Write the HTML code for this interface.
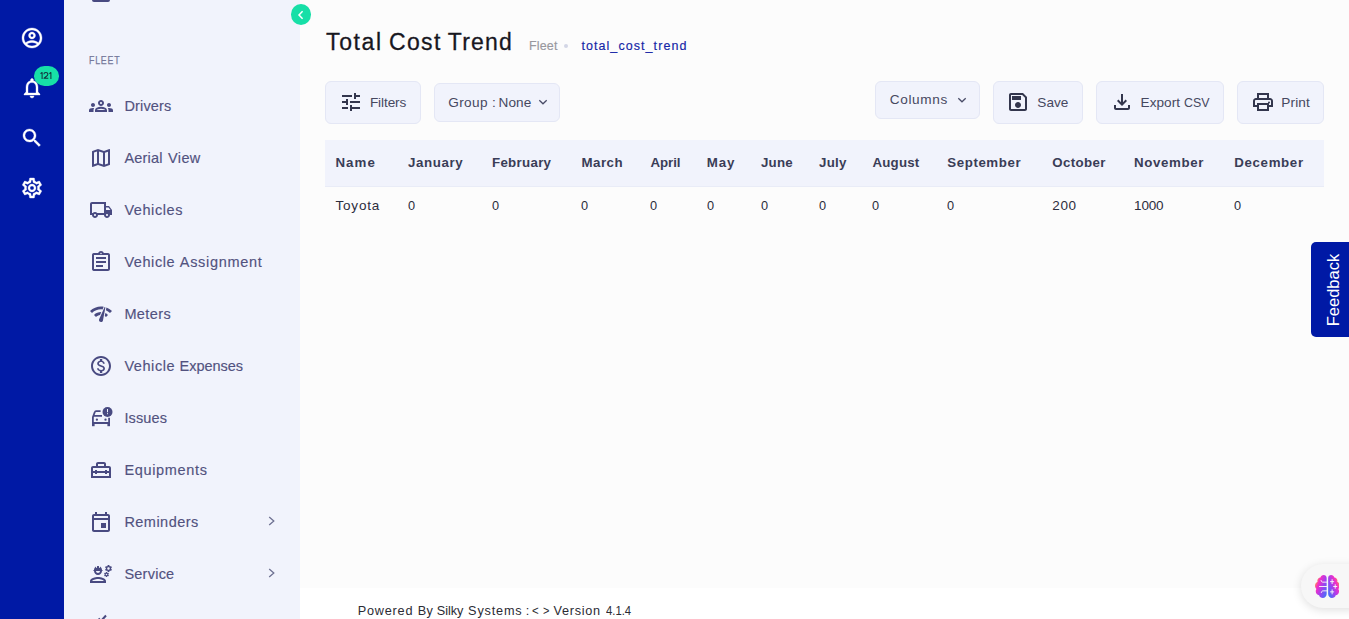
<!DOCTYPE html>
<html><head><meta charset="utf-8"><title>Total Cost Trend</title>
<style>
*{box-sizing:border-box;margin:0;padding:0}
html,body{width:1349px;height:619px;overflow:hidden;background:#fcfcfc;font-family:"Liberation Sans",sans-serif;}
.abs{position:absolute}
#rail{left:0;top:0;width:64px;height:619px;background:#0019a5}
#side{left:64px;top:0;width:236px;height:619px;background:#f1f3fc}
#main{left:300px;top:0;width:1049px;height:588px;background:#fcfcfc}
#foot{left:300px;top:588px;width:1049px;height:31px;background:#fff}
.t{position:absolute;white-space:nowrap;line-height:1;}
.ic{position:absolute;width:24px;height:24px}
.ic svg{display:block;width:24px;height:24px}
.nav{color:#50547f;font-size:15px}
.btn{position:absolute;background:#f1f3fc;border:1px solid #e4e7f5;border-radius:6px}
.bt{color:#4a4d68;font-size:14px}
.th{color:#33364d;font-size:14px;font-weight:bold}
.td{color:#2c2d3c;font-size:14px}
</style></head><body>
<div id="rail" class="abs"></div>
<div id="side" class="abs"></div>
<div id="main" class="abs"></div>
<div id="foot" class="abs"></div>
<svg class="abs" style="left:20px;top:26px" width="24" height="24" viewBox="0 0 24 24" fill="#ffffff" stroke="#ffffff" stroke-width=".35"><path d="M12 2C6.48 2 2 6.48 2 12s4.48 10 10 10 10-4.48 10-10S17.52 2 12 2zM7.07 18.28c.43-.9 3.05-1.78 4.93-1.78s4.51.88 4.93 1.78C15.57 19.36 13.86 20 12 20s-3.57-.64-4.93-1.72zm11.29-1.45c-1.43-1.74-4.9-2.33-6.36-2.33s-4.93.59-6.36 2.33C4.62 15.49 4 13.82 4 12c0-4.41 3.59-8 8-8s8 3.59 8 8c0 1.82-.62 3.49-1.64 4.83zM12 6c-1.94 0-3.5 1.56-3.5 3.5S10.06 13 12 13s3.5-1.56 3.5-3.5S13.94 6 12 6zm0 5c-.83 0-1.5-.67-1.5-1.5S11.17 8 12 8s1.5.67 1.5 1.5S12.83 11 12 11z"/></svg>
<svg class="abs" style="left:20px;top:76px" width="24" height="24" viewBox="0 0 24 24" fill="#ffffff" stroke="#ffffff" stroke-width=".35"><path d="M12 22c1.1 0 2-.9 2-2h-4c0 1.1.9 2 2 2zm6-6v-5c0-3.07-1.63-5.64-4.5-6.32V4c0-.83-.67-1.5-1.5-1.5s-1.5.67-1.5 1.5v.68C7.64 5.36 6 7.92 6 11v5l-2 2v1h16v-1l-2-2zm-2 1H8v-6c0-2.48 1.51-4.5 4-4.5s4 2.02 4 4.5v6z"/></svg>
<svg class="abs" style="left:20px;top:126px" width="24" height="24" viewBox="0 0 24 24" fill="#ffffff" stroke="#ffffff" stroke-width=".35"><path d="M15.5 14h-.79l-.28-.27C15.41 12.59 16 11.11 16 9.5 16 5.91 13.09 3 9.5 3S3 5.91 3 9.5 5.91 16 9.5 16c1.61 0 3.09-.59 4.23-1.57l.27.28v.79l5 4.99L20.49 19l-4.99-5zm-6 0C7.01 14 5 11.99 5 9.5S7.01 5 9.5 5 14 7.01 14 9.5 11.99 14 9.5 14z"/></svg>
<svg class="abs" style="left:20px;top:176px" width="24" height="24" viewBox="0 0 24 24" fill="#ffffff" stroke="#ffffff" stroke-width=".35"><path d="M19.43 12.98c.04-.32.07-.64.07-.98 0-.34-.03-.66-.07-.98l2.11-1.65c.19-.15.24-.42.12-.64l-2-3.46c-.09-.16-.26-.25-.44-.25-.06 0-.12.01-.17.03l-2.49 1c-.52-.4-1.08-.73-1.69-.98l-.38-2.65C14.46 2.18 14.25 2 14 2h-4c-.25 0-.46.18-.49.42l-.38 2.65c-.61.25-1.17.59-1.69.98l-2.49-1c-.06-.02-.12-.03-.18-.03-.17 0-.34.09-.43.25l-2 3.46c-.13.22-.07.49.12.64l2.11 1.65c-.04.32-.07.65-.07.98 0 .33.03.66.07.98l-2.11 1.65c-.19.15-.24.42-.12.64l2 3.46c.09.16.26.25.44.25.06 0 .12-.01.17-.03l2.49-1c.52.4 1.08.73 1.69.98l.38 2.65c.03.24.24.42.49.42h4c.25 0 .46-.18.49-.42l.38-2.65c.61-.25 1.17-.59 1.69-.98l2.49 1c.06.02.12.03.18.03.17 0 .34-.09.43-.25l2-3.46c.12-.22.07-.49-.12-.64l-2.11-1.65zm-1.98-1.71c.04.31.05.52.05.73 0 .21-.02.43-.05.73l-.14 1.13.89.7 1.08.84-.7 1.21-1.27-.51-1.04-.42-.9.68c-.43.32-.84.56-1.25.73l-1.06.43-.16 1.13-.2 1.35h-1.4l-.19-1.35-.16-1.13-1.06-.43c-.43-.18-.83-.41-1.23-.71l-.91-.7-1.06.43-1.27.51-.7-1.21 1.08-.84.89-.7-.14-1.13c-.03-.31-.05-.54-.05-.74s.02-.43.05-.73l.14-1.13-.89-.7-1.08-.84.7-1.21 1.27.51 1.04.42.9-.68c.43-.32.84-.56 1.25-.73l1.06-.43.16-1.13.2-1.35h1.39l.19 1.35.16 1.13 1.06.43c.43.18.83.41 1.23.71l.91.7 1.06-.43 1.27-.51.7 1.21-1.07.85-.89.7.14 1.13zM12 8c-2.21 0-4 1.79-4 4s1.79 4 4 4 4-1.79 4-4-1.79-4-4-4zm0 6c-1.1 0-2-.9-2-2s.9-2 2-2 2 .9 2 2-.9 2-2 2z"/></svg>
<div class="abs" style="left:34px;top:66px;width:25px;height:19.7px;border-radius:10.5px/9.85px;background:#17dfa7"></div>
<svg class="abs" style="left:34px;top:66px" width="25" height="20" viewBox="34 66 25 20" fill="none" stroke="#15323c" stroke-width="1.02" stroke-linejoin="round"><title>121</title><path d="M40.5 73.7 L42.1 72.5 L42.1 78.9 M43.9 74.3 C43.9 71.8 47.9 71.8 47.900 74.200 C47.900 75.600 45.600 76.800 44 78.350 L48.300 78.350 M49.300 73.700 L50.900 72.500 L50.900 78.900"/></svg>
<svg class="abs" style="left:89px;top:94px" width="24" height="24" viewBox="0 0 24 24" fill="#494a81"><path d="M4 13c1.1 0 2-.9 2-2s-.9-2-2-2-2 .9-2 2 .9 2 2 2zm1.13 1.1c-.37-.06-.74-.1-1.13-.1-.99 0-1.93.21-2.78.58C.48 14.900 0 15.620 0 16.430V18h4.500v-1.610c0-.83.23-1.610.63-2.290zM20 13c1.100 0 2-.9 2-2s-.9-2-2-2-2 .9-2 2 .9 2 2 2zm4 3.430c0-.81-.48-1.530-1.220-1.850-.85-.37-1.790-.58-2.780-.58-.39 0-.76.040-1.130.1.400.68.630 1.460.630 2.290V18H24v-1.570zm-7.760-2.780c-1.170-.52-2.610-.9-4.240-.9-1.630 0-3.070.39-4.240.9C6.680 14.130 6 15.210 6 16.390V18h12v-1.610c0-1.180-.68-2.260-1.760-2.740zM8.070 16c.09-.23.130-.39.910-.69.970-.38 1.990-.56 3.020-.56s2.050.18 3.020.56c.77.3.81.46.910.69H8.070zM12 8c.55 0 1 .45 1 1s-.45 1-1 1-1-.45-1-1 .45-1 1-1m0-2c-1.660 0-3 1.340-3 3s1.340 3 3 3 3-1.340 3-3-1.340-3-3-3z"/></svg>
<svg class="abs" style="left:89px;top:146px" width="24" height="24" viewBox="0 0 24 24" fill="#494a81"><path d="M20.5 3l-.16.03L15 5.1 9 3 3.36 4.9c-.21.07-.36.25-.36.48V20.500c0 .28.22.5.5.5l.16-.03L9 18.900l6 2.100 5.640-1.900c.21-.07.36-.25.36-.48V3.500c0-.28-.22-.5-.5-.5zM10 5.470l4 1.400v11.660l-4-1.400V5.470zm-5 .99l3-1.010v11.700l-3 1.160V6.460zm14 11.080l-3 1.010V6.860l3-1.160v11.840z"/></svg>
<svg class="abs" style="left:89px;top:198px" width="24" height="24" viewBox="0 0 24 24" fill="#494a81"><path d="M20 8h-3V4H3c-1.1 0-2 .9-2 2v11h2c0 1.660 1.340 3 3 3s3-1.340 3-3h6c0 1.660 1.340 3 3 3s3-1.340 3-3h2v-5l-3-4zm-.5 1.500l1.960 2.500H17V9.500h2.500zM6 18c-.55 0-1-.45-1-1s.45-1 1-1 1 .45 1 1-.45 1-1 1zm2.220-3c-.55-.61-1.330-1-2.220-1s-1.670.39-2.220 1H3V6h12v9H8.220zM18 18c-.55 0-1-.45-1-1s.45-1 1-1 1 .45 1 1-.45 1-1 1z"/></svg>
<svg class="abs" style="left:89px;top:250px" width="24" height="24" viewBox="0 0 24 24" fill="#494a81"><path d="M7 15h7v2H7zm0-4h10v2H7zm0-4h10v2H7zm12-4h-4.180C14.400 1.840 13.300 1 12 1c-1.300 0-2.400.84-2.820 2H5c-.14 0-.27.010-.4.040-.39.080-.74.280-1.010.55-.18.180-.33.400-.43.640-.1.230-.16.490-.16.770v14c0 .27.060.54.160.78s.25.450.43.640c.27.270.62.470 1.010.55.130.02.260.03.400.03h14c1.100 0 2-.9 2-2V5c0-1.100-.9-2-2-2zm-7-.25c.41 0 .75.340.75.750s-.34.750-.75.750-.75-.34-.75-.75.340-.75.750-.75zM19 19H5V5h14v14z"/></svg>
<svg class="abs" style="left:89px;top:302px" width="24" height="24" viewBox="0 0 24 24" fill="#494a81"><path d="M15.9 5c-.17 0-.32.09-.41.23l-.07.15-5.180 11.650c-.16.290-.26.610-.26.960 0 1.110.9 2.010 2.010 2.010.96 0 1.770-.68 1.960-1.590l.01-.03L16.400 5.500c0-.28-.22-.5-.5-.5zM1 9l2 2c2.880-2.880 6.790-4.080 10.530-3.620l1.190-2.680C9.890 3.840 4.740 5.270 1 9zm20 2l2-2c-1.640-1.640-3.550-2.820-5.590-3.570l-.53 2.820c1.500.62 2.900 1.530 4.120 2.750zm-4 4l2-2c-.8-.8-1.700-1.420-2.660-1.890l-.55 2.920c.42.270.83.590 1.210.97zM5 13l2 2c1.130-1.130 2.560-1.790 4.030-2l1.280-2.880c-2.630-.08-5.300.87-7.310 2.880z"/></svg>
<svg class="abs" style="left:89px;top:354px" width="24" height="24" viewBox="0 0 24 24" fill="#494a81"><path d="M12 2C6.480 2 2 6.480 2 12s4.480 10 10 10 10-4.480 10-10S17.520 2 12 2zm0 18c-4.410 0-8-3.590-8-8s3.590-8 8-8 8 3.590 8 8-3.590 8-8 8zm.31-8.860c-1.770-.45-2.340-.94-2.340-1.670 0-.84.790-1.430 2.100-1.430 1.380 0 1.900.66 1.940 1.640h1.710c-.05-1.340-.87-2.570-2.490-2.970V5H10.900v1.690c-1.510.32-2.720 1.300-2.720 2.810 0 1.790 1.490 2.690 3.660 3.210 1.950.46 2.340 1.150 2.340 1.870 0 .53-.39 1.390-2.100 1.390-1.600 0-2.230-.72-2.320-1.640H8.040c.1 1.700 1.360 2.660 2.860 2.970V19h2.340v-1.670c1.520-.29 2.720-1.160 2.730-2.770-.01-2.200-1.900-2.960-3.660-3.420z"/></svg>
<svg class="abs" style="left:89px;top:406px" width="24" height="24" viewBox="0 0 24 24" fill="#494a81" stroke="#494a81"><circle cx="18.5" cy="6" r="5" stroke="none"/><rect x="18" y="3" width="1" height="3.2" fill="#f1f3fc" stroke="none"/><rect x="18" y="7.2" width="1" height="1" fill="#f1f3fc" stroke="none"/><path d="M11.6 5.1H7c-.6 0-1 .3-1.200.9L3.900 11.200V20M4.900 9.800H13M3.900 17H20.100M20.100 11.800V20" fill="none" stroke-width="1.8"/><rect x="3" y="17" width="2.600" height="3.200" stroke="none"/><rect x="18.400" y="17" width="2.600" height="3.200" stroke="none"/><circle cx="7.900" cy="13.700" r="1.150" stroke="none"/><circle cx="16.500" cy="13.700" r="1.150" stroke="none"/></svg>
<svg class="abs" style="left:89px;top:458px" width="24" height="24" viewBox="0 0 24 24" fill="#494a81"><path d="M20 8h-3V6c0-1.100-.9-2-2-2H9c-1.100 0-2 .9-2 2v2H4c-1.100 0-2 .9-2 2v10h20V10c0-1.100-.9-2-2-2zM9 6h6v2H9V6zm11 12H4v-3h2v1h2v-1h8v1h2v-1h2v3zm-2-5v-1h-2v1H8v-1H6v1H4v-3h16v3h-2z"/></svg>
<svg class="abs" style="left:89px;top:510px" width="24" height="24" viewBox="0 0 24 24" fill="#494a81"><path d="M19 4h-1V2h-2v2H8V2H6v2H5c-1.110 0-1.990.9-1.990 2L3 20c0 1.100.890 2 2 2h14c1.100 0 2-.9 2-2V6c0-1.100-.9-2-2-2zm0 16H5V10h14v10zm0-12H5V6h14v2zm-7 5h5v5h-5z"/></svg>
<svg class="abs" style="left:89px;top:562px" width="24" height="24" viewBox="0 0 24 24" fill="#494a81"><path d="M9 15c-2.670 0-8 1.340-8 4v2h16v-2c0-2.660-5.330-4-8-4zm-6 4c.22-.72 3.310-2 6-2 2.700 0 5.800 1.290 6 2H3zM4.740 9H5c0 2.210 1.790 4 4 4s4-1.790 4-4h.26c.27 0 .49-.22.49-.49v-.020c0-.27-.22-.49-.49-.49H13c0-1.480-.81-2.750-2-3.450V5.500c0 .28-.22.5-.5.5s-.5-.22-.5-.5V4.140C9.680 4.060 9.350 4 9 4s-.68.060-1 .14V5.500c0 .28-.22.5-.5.5S7 5.780 7 5.500v-.950C5.810 5.250 5 6.520 5 8h-.26c-.27 0-.49.220-.49.490v.030c0 .26.220.48.490.48zM11 9c0 1.100-.9 2-2 2s-2-.9-2-2h4zM22.100 6.840c.01-.11.020-.22.020-.34 0-.12-.010-.23-.030-.34l.74-.58c.07-.05.080-.15.040-.22l-.7-1.210c-.04-.08-.14-.1-.21-.08l-.86.350c-.18-.14-.38-.25-.59-.34l-.13-.93c-.02-.09-.09-.15-.18-.15h-1.400c-.09 0-.16.060-.17.150l-.13.930c-.21.090-.41.210-.59.340l-.87-.350c-.08-.03-.17 0-.21.080l-.7 1.210c-.04.080-.03.170.04.220l.74.580c-.02.110-.03.230-.03.340 0 .11.010.23.030.34l-.74.580c-.07.050-.08.150-.04.220l.7 1.210c.04.080.14.1.21.080l.87-.350c.18.140.38.250.59.340l.13.930c.01.090.08.150.17.150h1.400c.09 0 .16-.060.17-.150l.13-.930c.21-.09.41-.21.59-.340l.87.350c.08.030.17 0 .21-.080l.7-1.210c.04-.08.030-.17-.04-.220l-.73-.58zm-2.600.91c-.69 0-1.250-.56-1.250-1.250s.56-1.250 1.250-1.250 1.250.56 1.250 1.250-.56 1.250-1.250 1.250zM19.920 11.680l-.5-.87c-.03-.06-.1-.08-.15-.06l-.62.250c-.13-.1-.27-.18-.42-.24l-.09-.66c-.02-.06-.08-.1-.14-.1h-1c-.06 0-.11.040-.12.110l-.09.660c-.15.060-.29.150-.42.240l-.62-.250c-.06-.02-.12 0-.15.060l-.5.870c-.03.060-.02.120.03.160l.53.410c-.01.080-.02.160-.02.240 0 .08.010.17.020.24l-.53.410c-.05.040-.06.110-.03.160l.5.870c.03.060.1.080.15.060l.62-.250c.13.1.27.18.42.24l.09.660c.01.070.06.110.12.110h1c.06 0 .12-.040.12-.110l.09-.660c.15-.06.29-.15.420-.24l.62.250c.06.020.12 0 .15-.060l.5-.870c.03-.06.020-.12-.03-.160l-.52-.410c.01-.08.020-.16.020-.24 0-.08-.01-.17-.02-.24l.53-.410c.05-.04.060-.11.040-.170zm-2.420 1.650c-.46 0-.83-.38-.83-.83 0-.46.380-.83.830-.83s.83.380.83.830c0 .46-.37.830-.83.830z"/></svg>
<svg class="abs" style="left:266px;top:515px" width="12" height="12" viewBox="0 0 12 12" fill="none" stroke="#6e7192" stroke-width="1.3"><path d="M3.2 2 L7.8 6 L3.2 10"/></svg>
<svg class="abs" style="left:266px;top:567px" width="12" height="12" viewBox="0 0 12 12" fill="none" stroke="#6e7192" stroke-width="1.3"><path d="M3.2 2 L7.8 6 L3.2 10"/></svg>
<div class="abs" style="left:92px;top:-2px;width:18px;height:4px;background:#494a81;border-radius:0 0 2px 2px"></div>
<svg class="abs" style="left:88.6px;top:610.6px" width="24" height="24" viewBox="0 0 24 24" fill="none" stroke="#494a81" stroke-width="2"><path d="M9.5 7.5 L12 10 L17 4.5"/></svg>
<div class="abs" style="left:290.6px;top:4.4px;width:20.5px;height:21px;border-radius:50%;background:#17dfa7"></div>
<svg class="abs" style="left:294.6px;top:8.9px" width="12" height="12" viewBox="0 0 12 12" fill="none" stroke="#fff" stroke-width="1.5"><path d="M7.6 2.300 L4 6 L7.600 9.700"/></svg>
<div class="abs" style="left:563.9px;top:44px;width:4px;height:4px;border-radius:50%;background:#d3d6e6"></div>
<div class="btn" style="left:325px;top:81px;width:96px;height:43px"></div>
<div class="btn" style="left:434px;top:83px;width:126px;height:38.5px"></div>
<div class="btn" style="left:875px;top:81px;width:105px;height:37.5px"></div>
<div class="btn" style="left:993px;top:81px;width:90px;height:43px"></div>
<div class="btn" style="left:1096px;top:81px;width:128px;height:43px"></div>
<div class="btn" style="left:1237px;top:81px;width:87px;height:43px"></div>
<svg class="abs" style="left:339px;top:90px" width="24" height="24" viewBox="0 0 24 24" fill="#33364d"><path d="M3 17v2h6v-2H3zM3 5v2h10V5H3zm10 16v-2h8v-2h-8v-2h-2v6h2zM7 9v2H3v2h4v2h2V9H7zm14 4v-2H11v2h10zm-6-4h2V7h4V5h-4V3h-2v6z"/></svg>
<svg class="abs" style="left:1006px;top:90px" width="24" height="24" viewBox="0 0 24 24" fill="#33364d"><path d="M17 3H5c-1.110 0-2 .9-2 2v14c0 1.100.890 2 2 2h14c1.100 0 2-.9 2-2V7l-4-4zm2 16H5V5h11.170L19 7.830V19zm-7-7c-1.660 0-3 1.340-3 3s1.340 3 3 3 3-1.340 3-3-1.340-3-3-3zM6 6h9v4H6z"/></svg>
<svg class="abs" style="left:1109.5px;top:90px" width="24" height="24" viewBox="0 0 24 24" fill="#33364d"><path d="M18 15v3H6v-3H4v3c0 1.100.9 2 2 2h12c1.100 0 2-.9 2-2v-3h-2zm-1-4l-1.410-1.410L13 12.170V4h-2v8.170L8.410 9.590 7 11l5 5 5-5z"/></svg>
<svg class="abs" style="left:1251px;top:90px" width="24" height="24" viewBox="0 0 24 24" fill="#33364d"><path d="M19 8h-1V3H6v5H5c-1.660 0-3 1.340-3 3v6h4v4h12v-4h4v-6c0-1.660-1.340-3-3-3zM8 5h8v3H8V5zm8 12v2H8v-4h8v2zm2-2v-2H6v2H4v-4c0-.55.450-1 1-1h14c.55 0 1 .45 1 1v4h-2z M18 11.500a1 1 0 1 0 0 2 1 1 0 0 0 0-2z"/></svg>
<svg class="abs" style="left:536.7px;top:96px" width="12" height="12" viewBox="0 0 12 12" fill="none" stroke="#4a4d68" stroke-width="1.3"><path d="M2.3 4.3 L6 7.8 L9.700 4.300"/></svg>
<svg class="abs" style="left:956.2px;top:93.7px" width="12" height="12" viewBox="0 0 12 12" fill="none" stroke="#4a4d68" stroke-width="1.3"><path d="M2.3 4.3 L6 7.8 L9.700 4.300"/></svg>
<div class="abs" style="left:325px;top:140px;width:999px;height:47px;background:#f1f3fc;border-bottom:1px solid #e9ecf7"></div>
<div class="abs" style="left:1311px;top:242px;width:38px;height:95px;background:#0019a5;border-radius:5px 0 0 5px"></div>
<div class="t" style="left:1332.700px;top:289.500px;font-size:16.5px;color:#fff;transform:translate(-50%,-50%) rotate(-90deg)">Feedback</div>
<div class="abs" style="left:1301px;top:564px;width:70px;height:44px;border-radius:22px;background:#f7f7f7;box-shadow:0 2px 10px rgba(0,0,0,.13)"></div>
<svg class="abs" style="left:1314.6px;top:574.5px" width="24.8" height="23" viewBox="0 0 20 18" preserveAspectRatio="none"><defs><linearGradient id="bg" x1="0" y1="0.12" x2="1" y2="0.88"><stop offset="0.1" stop-color="#ffa23a"/><stop offset=".3" stop-color="#f52fc4"/><stop offset=".62" stop-color="#a040f0"/><stop offset="1" stop-color="#3f74f8"/></linearGradient></defs><g fill="url(#bg)"><path d="M9.4 2.3C9.4 1 8.3 0 7 0 5.700 0 4.700.8 4.400 1.900 3 1.900 1.900 3 1.900 4.400c0 .3.050.6.150.9C.850 5.800 0 7 0 8.400c0 1 .450 1.900 1.150 2.500-.35.500-.55 1.100-.55 1.800 0 1.600 1.200 2.900 2.700 3.100.4 1.300 1.600 2.200 3 2.200 1.700 0 3.100-1.400 3.100-3.100z"/><path transform="translate(20,0) scale(-1,1)" d="M9.4 2.3C9.4 1 8.3 0 7 0 5.700 0 4.700.8 4.400 1.900 3 1.900 1.900 3 1.900 4.400c0 .3.050.6.150.9C.850 5.800 0 7 0 8.400c0 1 .450 1.900 1.150 2.500-.35.500-.55 1.100-.55 1.800 0 1.600 1.200 2.900 2.700 3.100.4 1.300 1.600 2.200 3 2.200 1.700 0 3.100-1.400 3.100-3.100z"/></g><g stroke="#f7f7f7" stroke-width=".75" fill="none" stroke-linecap="round"><path d="M9.400 5.600H6.400c-.9 0-1.400-.5-1.500-1.300M9.400 9H3.600M9.400 12.400H6.600c-.9 0-1.400.5-1.500 1.300"/><path d="M13.800 3.600v3.200M12.500 5.200h2.600M16.300 7.600v2.800M15 9h2.600M13.800 11.600v3.200M12.500 13.200h2.600"/></g></svg>
<div class="t" style="left:89.4px;top:54.69px;font-size:11px;font-weight:normal;color:#74779a;letter-spacing:1.00px;transform-origin:0 0;transform:scaleX(0.8003);-webkit-text-stroke:0.25px #74779a">FLEET</div>
<div class="t" style="left:124.4px;top:98.73px;font-size:14.5px;font-weight:normal;color:#52527f;letter-spacing:0.16px;-webkit-text-stroke:0.15px #52527f">Drivers</div>
<div class="t" style="left:124.4px;top:150.73px;font-size:14.5px;font-weight:normal;color:#52527f;letter-spacing:0.18px;-webkit-text-stroke:0.15px #52527f">Aerial</div>
<div class="t" style="left:168.1px;top:150.73px;font-size:14.5px;font-weight:normal;color:#52527f;letter-spacing:0.34px;-webkit-text-stroke:0.15px #52527f">View</div>
<div class="t" style="left:124.4px;top:202.73px;font-size:14.5px;font-weight:normal;color:#52527f;letter-spacing:0.57px;-webkit-text-stroke:0.15px #52527f">Vehicles</div>
<div class="t" style="left:124.4px;top:254.73px;font-size:14.5px;font-weight:normal;color:#52527f;letter-spacing:0.57px;-webkit-text-stroke:0.15px #52527f">Vehicle</div>
<div class="t" style="left:179.8px;top:254.73px;font-size:14.5px;font-weight:normal;color:#52527f;letter-spacing:0.69px;-webkit-text-stroke:0.15px #52527f">Assignment</div>
<div class="t" style="left:124.4px;top:306.73px;font-size:14.5px;font-weight:normal;color:#52527f;letter-spacing:0.39px;-webkit-text-stroke:0.15px #52527f">Meters</div>
<div class="t" style="left:124.4px;top:358.73px;font-size:14.5px;font-weight:normal;color:#52527f;letter-spacing:0.57px;-webkit-text-stroke:0.15px #52527f">Vehicle</div>
<div class="t" style="left:179.5px;top:358.73px;font-size:14.5px;font-weight:normal;color:#52527f;letter-spacing:-0.01px;-webkit-text-stroke:0.15px #52527f">Expenses</div>
<div class="t" style="left:124.4px;top:410.73px;font-size:14.5px;font-weight:normal;color:#52527f;letter-spacing:0.12px;-webkit-text-stroke:0.15px #52527f">Issues</div>
<div class="t" style="left:124.4px;top:462.73px;font-size:14.5px;font-weight:normal;color:#52527f;letter-spacing:0.66px;-webkit-text-stroke:0.15px #52527f">Equipments</div>
<div class="t" style="left:124.4px;top:514.73px;font-size:14.5px;font-weight:normal;color:#52527f;letter-spacing:0.47px;-webkit-text-stroke:0.15px #52527f">Reminders</div>
<div class="t" style="left:124.4px;top:566.73px;font-size:14.5px;font-weight:normal;color:#52527f;letter-spacing:0.24px;-webkit-text-stroke:0.15px #52527f">Service</div>
<div class="t" style="left:326.0px;top:30.53px;font-size:23px;font-weight:normal;color:#17171f;letter-spacing:1.63px;-webkit-text-stroke:0.28px #17171f">Total</div>
<div class="t" style="left:388.9px;top:30.53px;font-size:23px;font-weight:normal;color:#17171f;letter-spacing:1.40px;-webkit-text-stroke:0.28px #17171f">Cost</div>
<div class="t" style="left:447.8px;top:30.53px;font-size:23px;font-weight:normal;color:#17171f;letter-spacing:1.17px;-webkit-text-stroke:0.28px #17171f">Trend</div>
<div class="t" style="left:529.1px;top:40.42px;font-size:12.5px;font-weight:normal;color:#98989e;letter-spacing:0.13px;-webkit-text-stroke:0.15px #98989e">Fleet</div>
<div class="t" style="left:581.4px;top:40.42px;font-size:12.5px;font-weight:normal;color:#1425a6;letter-spacing:1.07px;-webkit-text-stroke:0.15px #1425a6">total_cost_trend</div>
<div class="t" style="left:369.9px;top:96.49px;font-size:13.6px;font-weight:normal;color:#46485f;letter-spacing:-0.09px">Filters</div>
<div class="t" style="left:448.2px;top:96.49px;font-size:13.6px;font-weight:normal;color:#46485f;letter-spacing:0.40px">Group</div>
<div class="t" style="left:492.0px;top:96.49px;font-size:13.6px;font-weight:normal;color:#46485f;letter-spacing:0.00px">:</div>
<div class="t" style="left:498.5px;top:96.49px;font-size:13.6px;font-weight:normal;color:#46485f;letter-spacing:0.07px">None</div>
<div class="t" style="left:889.7px;top:92.79px;font-size:13.6px;font-weight:normal;color:#46485f;letter-spacing:0.68px">Columns</div>
<div class="t" style="left:1037.3px;top:96.49px;font-size:13.6px;font-weight:normal;color:#46485f;letter-spacing:0.04px">Save</div>
<div class="t" style="left:1140.6px;top:96.49px;font-size:13.6px;font-weight:normal;color:#46485f;letter-spacing:0.02px">Export</div>
<div class="t" style="left:1183.8px;top:96.49px;font-size:13.6px;font-weight:normal;color:#46485f;letter-spacing:0.00px;transform-origin:0 0;transform:scaleX(0.9122)">CSV</div>
<div class="t" style="left:1281.2px;top:96.49px;font-size:13.6px;font-weight:normal;color:#46485f;letter-spacing:0.19px">Print</div>
<div class="t" style="left:357.8px;top:604.95px;font-size:12.7px;font-weight:normal;color:#2b2b33;letter-spacing:0.77px">Powered</div>
<div class="t" style="left:417.8px;top:604.95px;font-size:12.7px;font-weight:normal;color:#2b2b33;letter-spacing:0.19px">By</div>
<div class="t" style="left:436.7px;top:604.95px;font-size:12.7px;font-weight:normal;color:#2b2b33;letter-spacing:-0.02px">Silky</div>
<div class="t" style="left:468.1px;top:604.95px;font-size:12.7px;font-weight:normal;color:#2b2b33;letter-spacing:0.82px">Systems</div>
<div class="t" style="left:525.8px;top:604.95px;font-size:12.7px;font-weight:normal;color:#2b2b33;letter-spacing:0.00px">:</div>
<div class="t" style="left:532.4px;top:604.95px;font-size:12.7px;font-weight:normal;color:#2b2b33;letter-spacing:0.00px;transform-origin:0 0;transform:scaleX(0.9027)">&lt;</div>
<div class="t" style="left:543.0px;top:604.95px;font-size:12.7px;font-weight:normal;color:#2b2b33;letter-spacing:0.00px;transform-origin:0 0;transform:scaleX(0.8623)">&gt;</div>
<div class="t" style="left:553.6px;top:604.95px;font-size:12.7px;font-weight:normal;color:#2b2b33;letter-spacing:0.70px">Version</div>
<div class="t" style="left:605.6px;top:604.95px;font-size:12.7px;font-weight:normal;color:#2b2b33;letter-spacing:0.00px;transform-origin:0 0;transform:scaleX(0.8895)">4.1.4</div>
<div class="t" style="left:335.4px;top:155.94px;font-size:13.3px;font-weight:bold;color:#3a3d57;letter-spacing:1.06px">Name</div>
<div class="t" style="left:407.9px;top:155.94px;font-size:13.3px;font-weight:bold;color:#3a3d57;letter-spacing:0.63px">January</div>
<div class="t" style="left:492.0px;top:155.94px;font-size:13.3px;font-weight:bold;color:#3a3d57;letter-spacing:0.30px">February</div>
<div class="t" style="left:581.4px;top:155.94px;font-size:13.3px;font-weight:bold;color:#3a3d57;letter-spacing:0.51px">March</div>
<div class="t" style="left:650.4px;top:155.94px;font-size:13.3px;font-weight:bold;color:#3a3d57;letter-spacing:-0.05px">April</div>
<div class="t" style="left:706.7px;top:155.94px;font-size:13.3px;font-weight:bold;color:#3a3d57;letter-spacing:0.91px">May</div>
<div class="t" style="left:761.0px;top:155.94px;font-size:13.3px;font-weight:bold;color:#3a3d57;letter-spacing:0.18px">June</div>
<div class="t" style="left:819.1px;top:155.94px;font-size:13.3px;font-weight:bold;color:#3a3d57;letter-spacing:0.23px">July</div>
<div class="t" style="left:872.4px;top:155.94px;font-size:13.3px;font-weight:bold;color:#3a3d57;letter-spacing:0.22px">August</div>
<div class="t" style="left:947.3px;top:155.94px;font-size:13.3px;font-weight:bold;color:#3a3d57;letter-spacing:0.57px">September</div>
<div class="t" style="left:1052.3px;top:155.94px;font-size:13.3px;font-weight:bold;color:#3a3d57;letter-spacing:0.34px">October</div>
<div class="t" style="left:1134.1px;top:155.94px;font-size:13.3px;font-weight:bold;color:#3a3d57;letter-spacing:0.60px">November</div>
<div class="t" style="left:1234.3px;top:155.94px;font-size:13.3px;font-weight:bold;color:#3a3d57;letter-spacing:0.64px">December</div>
<div class="t" style="left:335.4px;top:199.17px;font-size:13.5px;font-weight:normal;color:#2c2d3c;letter-spacing:0.84px">Toyota</div>
<div class="t" style="left:407.9px;top:199.17px;font-size:13.5px;font-weight:normal;color:#2c2d3c;letter-spacing:0.00px;transform-origin:0 0;transform:scaleX(0.9447)">0</div>
<div class="t" style="left:492.0px;top:199.17px;font-size:13.5px;font-weight:normal;color:#2c2d3c;letter-spacing:0.00px;transform-origin:0 0;transform:scaleX(0.9447)">0</div>
<div class="t" style="left:581.4px;top:199.17px;font-size:13.5px;font-weight:normal;color:#2c2d3c;letter-spacing:0.00px;transform-origin:0 0;transform:scaleX(0.9447)">0</div>
<div class="t" style="left:650.4px;top:199.17px;font-size:13.5px;font-weight:normal;color:#2c2d3c;letter-spacing:0.00px;transform-origin:0 0;transform:scaleX(0.9447)">0</div>
<div class="t" style="left:706.7px;top:199.17px;font-size:13.5px;font-weight:normal;color:#2c2d3c;letter-spacing:0.00px;transform-origin:0 0;transform:scaleX(0.9447)">0</div>
<div class="t" style="left:761.0px;top:199.17px;font-size:13.5px;font-weight:normal;color:#2c2d3c;letter-spacing:0.00px;transform-origin:0 0;transform:scaleX(0.9447)">0</div>
<div class="t" style="left:819.1px;top:199.17px;font-size:13.5px;font-weight:normal;color:#2c2d3c;letter-spacing:0.00px;transform-origin:0 0;transform:scaleX(0.9447)">0</div>
<div class="t" style="left:872.4px;top:199.17px;font-size:13.5px;font-weight:normal;color:#2c2d3c;letter-spacing:0.00px;transform-origin:0 0;transform:scaleX(0.9447)">0</div>
<div class="t" style="left:947.3px;top:199.17px;font-size:13.5px;font-weight:normal;color:#2c2d3c;letter-spacing:0.00px;transform-origin:0 0;transform:scaleX(0.9447)">0</div>
<div class="t" style="left:1052.3px;top:199.17px;font-size:13.5px;font-weight:normal;color:#2c2d3c;letter-spacing:0.58px">200</div>
<div class="t" style="left:1134.1px;top:199.17px;font-size:13.5px;font-weight:normal;color:#2c2d3c;letter-spacing:-0.22px">1000</div>
<div class="t" style="left:1234.3px;top:199.17px;font-size:13.5px;font-weight:normal;color:#2c2d3c;letter-spacing:0.00px;transform-origin:0 0;transform:scaleX(0.9447)">0</div>
</body></html>
